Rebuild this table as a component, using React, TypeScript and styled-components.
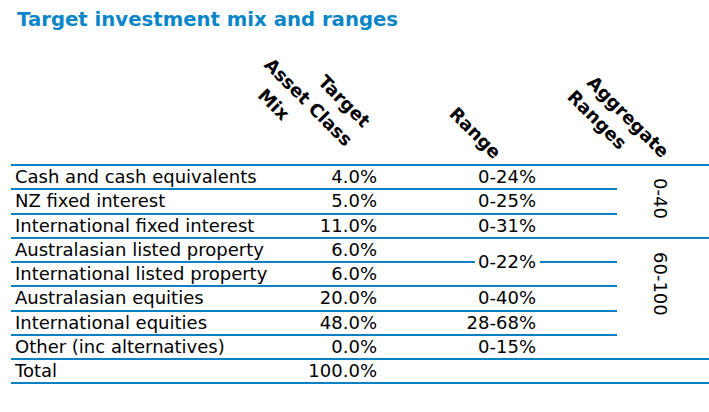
import React from "react";
import styled, { createGlobalStyle } from "styled-components";

const BLUE = "#0b80c3";

interface AggSpan {
  label: string;
  span: number;
  lift?: boolean;
}

interface MixRow {
  asset: string;
  target: string;
  range?: string;
  rangeSpan?: number;
  agg?: AggSpan;
}

const rows: MixRow[] = [
  { asset: "Cash and cash equivalents", target: "4.0%", range: "0-24%", agg: { label: "0-40", span: 3 } },
  { asset: "NZ fixed interest", target: "5.0%", range: "0-25%" },
  { asset: "International fixed interest", target: "11.0%", range: "0-31%" },
  {
    asset: "Australasian listed property",
    target: "6.0%",
    range: "0-22%",
    rangeSpan: 2,
    agg: { label: "60-100", span: 5, lift: true },
  },
  { asset: "International listed property", target: "6.0%" },
  { asset: "Australasian equities", target: "20.0%", range: "0-40%" },
  { asset: "International equities", target: "48.0%", range: "28-68%" },
  { asset: "Other (inc alternatives)", target: "0.0%", range: "0-15%" },
  { asset: "Total", target: "100.0%", range: "", agg: { label: "", span: 1 } },
];

const GlobalStyle = createGlobalStyle`
  html, body {
    margin: 0;
    background: #fff;
  }
  body {
    font-family: "DejaVu Sans", Verdana, sans-serif;
    color: #000;
  }
`;

const Page = styled.div`
  width: 709px;
`;

const Title = styled.h1`
  margin: 0;
  padding: 8px 0 0 17px;
  font-size: 19.7px;
  line-height: 24px;
  font-weight: 700;
  color: #0a86c8;
`;

const HeaderRow = styled.div`
  display: grid;
  grid-template-columns: 279px 95px 232px 92px;
  height: 132px;
  margin-left: 11px;
`;

const HeaderCell = styled.div`
  min-width: 0;
`;

interface RotatedProps {
  $left: number;
  $top: number;
  $lh: number;
}
const RotatedLabel = styled.div<RotatedProps>`
  width: max-content;
  margin-left: ${({ $left }) => $left}px;
  margin-top: ${({ $top }) => $top}px;
  transform: rotate(45deg);
  transform-origin: 0 0;
  font-size: 18px;
  font-weight: 700;
  line-height: ${({ $lh }) => $lh}px;
  white-space: nowrap;
`;

const LabelLine = styled.div<{ $indent?: number }>`
  padding-left: ${({ $indent }) => $indent ?? 0}px;
`;

const Table = styled.table`
  margin-left: 11px;
  width: 698px;
  table-layout: fixed;
  border-collapse: separate;
  border-spacing: 0;
  font-size: 18px;
  line-height: 22.25px;
`;

const Col = styled.col<{ $w: number }>`
  width: ${({ $w }) => $w}px;
`;

const Cell = styled.td<{ $first?: boolean }>`
  padding: 0;
  border-bottom: 2px solid ${BLUE};
  border-top: ${({ $first }) => ($first ? `2px solid ${BLUE}` : "none")};
  white-space: nowrap;
  vertical-align: middle;
`;

const AssetCell = styled(Cell)`
  padding-left: 4px;
  text-align: left;
`;

const TargetCell = styled(Cell)`
  padding-right: 8px;
  text-align: right;
`;

const RangeCell = styled(Cell)`
  padding-right: 81px;
  text-align: right;
`;

const SplitCell = styled(Cell)``;

const SplitRange = styled.div`
  display: flex;
  align-items: center;
  height: 46.5px;
`;

const RangeRule = styled.span<{ $grow?: boolean }>`
  height: 2px;
  background: ${BLUE};
  flex: ${({ $grow }) => ($grow ? "1 1 auto" : "0 0 77px")};
`;

const SplitLabel = styled.span`
  margin: 0 4px 0 3px;
`;

const AggCell = styled(Cell)<{ $lift?: boolean }>`
  padding-right: 6px;
  padding-bottom: ${({ $lift }) => ($lift ? "24px" : "0")};
  text-align: center;
`;

const VerticalText = styled.span`
  display: inline-block;
  writing-mode: vertical-rl;
  line-height: 22px;
`;

const renderRange = (row: MixRow, first: boolean) => {
  if (row.range === undefined) return null;
  if (row.rangeSpan && row.rangeSpan > 1) {
    return (
      <SplitCell rowSpan={row.rangeSpan} $first={first}>
        <SplitRange>
          <RangeRule $grow />
          <SplitLabel>{row.range}</SplitLabel>
          <RangeRule />
        </SplitRange>
      </SplitCell>
    );
  }
  return <RangeCell $first={first}>{row.range}</RangeCell>;
};

export default function App() {
  return (
    <Page>
      <GlobalStyle />
      <Title>Target investment mix and ranges</Title>
      <HeaderRow>
        <HeaderCell />
        <HeaderCell>
          <RotatedLabel $left={4.6} $top={1.5} $lh={26}>
            <LabelLine $indent={50}>Target</LabelLine>
            <LabelLine>Asset Class</LabelLine>
            <LabelLine $indent={17}>Mix</LabelLine>
          </RotatedLabel>
        </HeaderCell>
        <HeaderCell>
          <RotatedLabel $left={75.5} $top={70.4} $lh={24}>
            <LabelLine>Range</LabelLine>
          </RotatedLabel>
        </HeaderCell>
        <HeaderCell>
          <RotatedLabel $left={-20.8} $top={36.4} $lh={24}>
            <LabelLine $indent={4}>Aggregate</LabelLine>
            <LabelLine>Ranges</LabelLine>
          </RotatedLabel>
        </HeaderCell>
      </HeaderRow>
      <Table>
        <colgroup>
          <Col $w={279} />
          <Col $w={95} />
          <Col $w={232} />
          <Col $w={92} />
        </colgroup>
        <tbody>
          {rows.map((row, i) => {
            const first = i === 0;
            return (
              <tr key={row.asset}>
                <AssetCell $first={first}>{row.asset}</AssetCell>
                <TargetCell $first={first}>{row.target}</TargetCell>
                {renderRange(row, first)}
                {row.agg && (
                  <AggCell rowSpan={row.agg.span} $first={first} $lift={row.agg.lift}>
                    {row.agg.label && <VerticalText>{row.agg.label}</VerticalText>}
                  </AggCell>
                )}
              </tr>
            );
          })}
        </tbody>
      </Table>
    </Page>
  );
}
